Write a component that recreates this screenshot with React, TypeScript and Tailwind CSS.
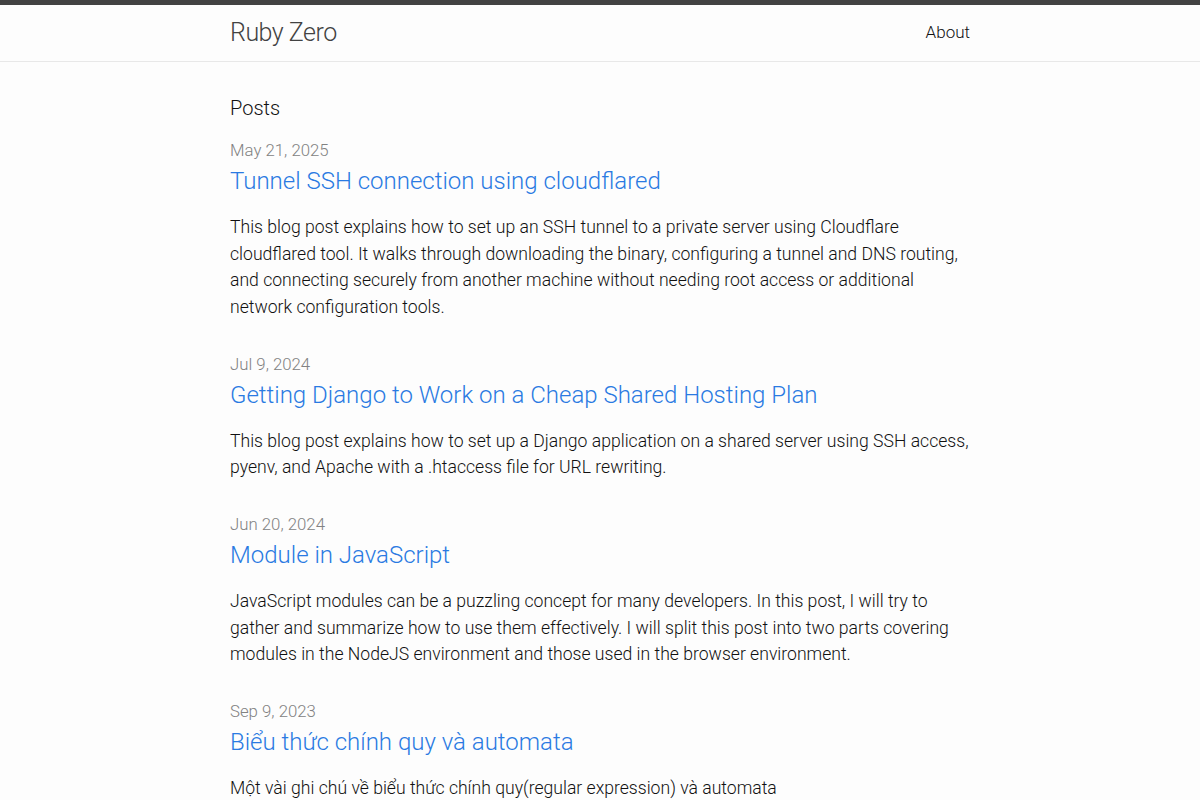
import React from "react";

const posts = [
  {
    date: "May 21, 2025",
    title: "Tunnel SSH connection using cloudflared",
    excerpt:
      "This blog post explains how to set up an SSH tunnel to a private server using Cloudflare cloudflared tool. It walks through downloading the binary, configuring a tunnel and DNS routing, and connecting securely from another machine without needing root access or additional network configuration tools.",
  },
  {
    date: "Jul 9, 2024",
    title: "Getting Django to Work on a Cheap Shared Hosting Plan",
    excerpt:
      "This blog post explains how to set up a Django application on a shared server using SSH access, pyenv, and Apache with a .htaccess file for URL rewriting.",
  },
  {
    date: "Jun 20, 2024",
    title: "Module in JavaScript",
    excerpt:
      "JavaScript modules can be a puzzling concept for many developers. In this post, I will try to gather and summarize how to use them effectively. I will split this post into two parts covering modules in the NodeJS environment and those used in the browser environment.",
  },
  {
    date: "Sep 9, 2023",
    title: "Biểu thức chính quy và automata",
    excerpt: "Một vài ghi chú về biểu thức chính quy(regular expression) và automata",
  },
];

export default function App() {
  return (
    <div
      className="min-h-[800px] bg-[#fdfdfd] text-[#111] font-light"
      style={{ fontFamily: "Roboto, 'Noto Sans', sans-serif" }}
    >
      <header className="border-t-[5px] border-t-[#424242] border-b border-b-[#e8e8e8]">
        <div className="mx-auto w-[740px] h-[56px] flex items-center justify-between">
          <a className="text-[25px] leading-[54px] text-[#424242] tracking-[-0.5px]">Ruby Zero</a>
          <nav>
            <a className="text-[17px] leading-[54px] text-[#111] -mt-[2px] block">About</a>
          </nav>
        </div>
      </header>
      <main className="mx-auto w-[740px] pt-[32px]">
        <h2 className="text-[20px] leading-[28px] mb-[16px]">Posts</h2>
        <ul className="flex flex-col gap-[31px]">
          {posts.map((p) => (
            <li key={p.title}>
              <div className="text-[16.8px] leading-[24px] text-[#828282]">{p.date}</div>
              <h3 className="text-[24px] leading-[36px] text-[#2a7ae2] mt-[1px] mb-[15px]">{p.title}</h3>
              <p className="text-[17.6px] leading-[26.67px]">{p.excerpt}</p>
            </li>
          ))}
        </ul>
      </main>
    </div>
  );
}
